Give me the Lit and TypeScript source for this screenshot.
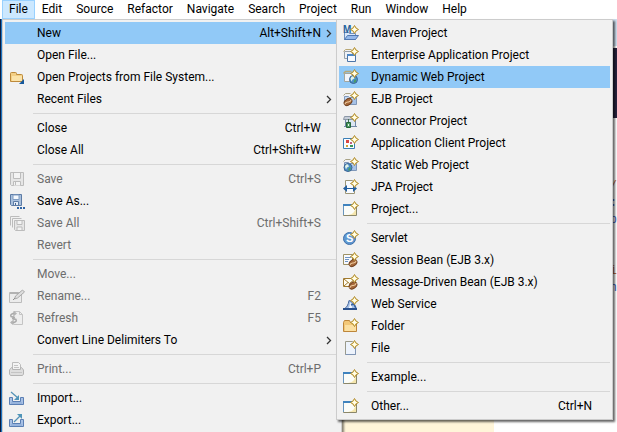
import { LitElement, html, css, svg, nothing, type SVGTemplateResult, type TemplateResult } from "lit";
import { customElement, property } from "lit/decorators.js";

interface Entry {
  label?: string;
  keys?: string;
  icon?: string;
  more?: boolean;
  disabled?: boolean;
  active?: boolean;
  separator?: boolean;
}

const SEP: Entry = { separator: true };

const BAR = ["File", "Edit", "Source", "Refactor", "Navigate", "Search", "Project", "Run", "Window", "Help"];

const FILE_MENU: Entry[] = [
  { label: "New", keys: "Alt+Shift+N", more: true, active: true },
  { label: "Open File..." },
  { label: "Open Projects from File System...", icon: "openProjects" },
  { label: "Recent Files", more: true },
  SEP,
  { label: "Close", keys: "Ctrl+W" },
  { label: "Close All", keys: "Ctrl+Shift+W" },
  SEP,
  { label: "Save", keys: "Ctrl+S", icon: "save", disabled: true },
  { label: "Save As...", icon: "saveAs" },
  { label: "Save All", keys: "Ctrl+Shift+S", icon: "saveAll", disabled: true },
  { label: "Revert", disabled: true },
  SEP,
  { label: "Move...", disabled: true },
  { label: "Rename...", keys: "F2", icon: "rename", disabled: true },
  { label: "Refresh", keys: "F5", icon: "refresh", disabled: true },
  { label: "Convert Line Delimiters To", more: true },
  SEP,
  { label: "Print...", keys: "Ctrl+P", icon: "print", disabled: true },
  SEP,
  { label: "Import...", icon: "importing" },
  { label: "Export...", icon: "exporting" },
];

const NEW_MENU: Entry[] = [
  { label: "Maven Project", icon: "maven" },
  { label: "Enterprise Application Project", icon: "enterprise" },
  { label: "Dynamic Web Project", icon: "dynamicWeb", active: true },
  { label: "EJB Project", icon: "ejb" },
  { label: "Connector Project", icon: "connector" },
  { label: "Application Client Project", icon: "client" },
  { label: "Static Web Project", icon: "staticWeb" },
  { label: "JPA Project", icon: "jpa" },
  { label: "Project...", icon: "wizard" },
  SEP,
  { label: "Servlet", icon: "servlet" },
  { label: "Session Bean (EJB 3.x)", icon: "session" },
  { label: "Message-Driven Bean (EJB 3.x)", icon: "message" },
  { label: "Web Service", icon: "service" },
  { label: "Folder", icon: "folder" },
  { label: "File", icon: "file" },
  SEP,
  { label: "Example...", icon: "wizard" },
  SEP,
  { label: "Other...", keys: "Ctrl+N", icon: "wizard" },
];

const sparkle = svg`
  <path d="M11.5 .5l1.500 2.500 2.500 1.500-2.500 1.500-1.500 2.500-1.500-2.500-2.500-1.500 2.500-1.500z" fill="#fff3b8" stroke="#b08a2c"/>
  <path d="M11.5 2.500v4M9.500 4.500h4" stroke="#fffdf0"/>`;

const blueFolder = svg`
  <path d="M1.5 13.500v-8h4l1 1h7v7z" fill="#c3d8f2" stroke="#7f97b8"/>
  <path d="M.5 4.500l2-2h5" fill="none" stroke="#a9a387"/>
  <path d="M3 8h10v5H3z" fill="#a6c2e8"/>`;

const globe = (cx: number, cy: number) => svg`
  <circle cx=${cx} cy=${cy} r="4" fill="#4b8fca" stroke="#3c6493"/>
  <path d="M${cx - 3} ${cy - 1}q1-3 3-2l1 2-2 1-1 2z" fill="#e2f3e6"/>
  <path d="M${cx + 1} ${cy}l2 0-1 3-2 0z" fill="#4b9d62"/>`;

const bean = (cx: number, cy: number) => svg`
  <g transform="rotate(-35 ${cx} ${cy})">
    <ellipse cx=${cx} cy=${cy} rx="4.2" ry="3" fill="#a5683a" stroke="#70401f"/>
    <path d="M${cx - 4} ${cy}q2-1.6 4 0t4 0" fill="none" stroke="#f0cfa4"/>
  </g>`;

const ICONS: Record<string, SVGTemplateResult> = {
  openProjects: svg`
    <path d="M1.500 12.500v-8q0-1 1-1h4q1 0 1 1v1h5q1 0 1 1v6z" fill="#f3cf85" stroke="#bd8a3b"/>
    <path d="M3 7h10v5H3z" fill="#fbe3a9"/>
    <path d="M15 10v5h-5z" fill="#17599c"/>`,
  save: svg`
    <path d="M1.500 1.500h13v13h-12l-1-1z" fill="#e6e6e6" stroke="#bcbcbc"/>
    <path d="M4.500 2v5.500h7V2M4.500 14.500v-4h7v4M6.500 11v3" fill="#f3f3f3" stroke="#bcbcbc"/>`,
  saveAs: svg`
    <path d="M1.500 1.500h11v11h-10l-1-1z" fill="#a9c0dd" stroke="#5c7ba5"/>
    <path d="M4 2h6v4.500H4z" fill="#f4f8fd" stroke="#7f9cc2"/>
    <path d="M4.500 12V8.500h5V12" fill="#e5edf7" stroke="#5c7ba5"/>
    <path d="M6.500 10v2" stroke="#44648f"/>
    <path d="M8 14h2v2H8zM11 14h2v2h-2zM14 14h2v2h-2z" fill="#2f64a5"/>`,
  saveAll: svg`
    <path d="M1.500 10.500v-9h9M3.500 12.500v-9h9" fill="none" stroke="#bcbcbc"/>
    <path d="M5.500 5.500h10v10h-9l-1-1z" fill="#e6e6e6" stroke="#bcbcbc"/>
    <path d="M8 6v3.500h5V6M8 15v-3h5v3" fill="#f3f3f3" stroke="#bcbcbc"/>`,
  rename: svg`
    <path d="M.5 4.500h12v10H.5z" fill="#ececec" stroke="#bcbcbc"/>
    <path d="M1 5h8" stroke="#b2b2b2" stroke-width="2"/>
    <path d="M5.500 11l1-3 7-6 2 2-7 6z" fill="#dedede" stroke="#a8a8a8"/>
    <path d="M4 12l2-2" stroke="#8f8f8f"/>`,
  refresh: svg`
    <path d="M4.500 1.500h6l3 3v10h-9z" fill="#eee" stroke="#c4c4c4"/>
    <path d="M10.500 1.500v3h3" fill="none" stroke="#c4c4c4"/>
    <path d="M6 3.500H4q-3 1-2 3l4 1M2 12.500h3q3-1 2-3l-4-1" fill="none" stroke="#aaa" stroke-width="1.500"/>
    <path d="M5 1v5l3-2.500zM4 10v5l-3-2.500z" fill="#b4b4b4"/>`,
  print: svg`
    <path d="M3.500 7.500v-6h6l2 2v4" fill="#f4f4f4" stroke="#bcbcbc"/>
    <path d="M5 4.500h4M5 6.500h5" stroke="#c4c4c4"/>
    <path d="M.5 9l2-2.500h1v2h8v-2h1l2 2.500v4l-1 1.500h-12l-1-1.500z" fill="#dedede" stroke="#b4b4b4"/>
    <path d="M2 11.500h11" stroke="#c4c4c4"/>`,
  importing: svg`
    <path d="M.5 7.500h3v4h8v-4h3v7H.5z" fill="#a8c1e5" stroke="#5b7fb4"/>
    <path d="M2 13h11" stroke="#86a6d4"/>
    <path d="M2 2l7 6" stroke="#5291b6" stroke-width="1.200"/>
    <path d="M10 5v5H5z" fill="#4f94b8"/>`,
  exporting: svg`
    <path d="M.5 7.500h3v4h8v-4h3v7H.5z" fill="#a8c1e5" stroke="#5b7fb4"/>
    <path d="M2 13h11" stroke="#86a6d4"/>
    <path d="M5 10l7-7" stroke="#5291b6" stroke-width="1.200"/>
    <path d="M8 2h5v5z" fill="#4f94b8"/>`,
  maven: svg`
    <path d="M1.500 14.500v-7h4l1 1h6v6z" fill="#d8e7fa" stroke="#6f8fbd"/>
    <path d="M1.500 14.500l3-4h11l-3 4z" fill="#94b8ea" stroke="#5077b0"/>
    <text x="0" y="8" font-family="Liberation Sans, sans-serif" font-weight="700" font-size="10" fill="#27639e">M</text>
    ${sparkle}`,
  enterprise: svg`
    <path d="M1.500 11.500v-7h8v7z" fill="#eef1f6" stroke="#98a0a8"/>
    <path d="M.5 4.500l2-2h6" fill="none" stroke="#b9a876"/>
    <path d="M4.500 7.500h8v7h-8z" fill="#f7faff" stroke="#4c75a8"/>
    <path d="M4 8h9" stroke="#4c86c6" stroke-width="2"/>
    ${sparkle}`,
  dynamicWeb: svg`
    <path d="M1.500 12.500v-8h8v8z" fill="#f2f5fa" stroke="#a3a79f"/>
    <path d="M.5 4.500l2-2h6" fill="none" stroke="#b9a876" stroke-width="1.500"/>
    ${globe(10.5, 10.5)}${sparkle}`,
  ejb: svg`${blueFolder}${bean(5, 11)}${sparkle}`,
  connector: svg`
    <path d="M1.500 3.500h8l3 3h-12z" fill="#c5cdd8" stroke="#8b97a6"/>
    <path d="M2 7h11v6H2z" fill="#dce6f3"/>
    <path d="M2.500 7v6M12.500 7v6M1 13.500h13" stroke="#7389a6"/>
    <path d="M5.500 6v3" stroke="#43704f"/>
    <path d="M3.500 9.500h4v5h-4z" fill="#4f9a63" stroke="#27663a"/>
    <path d="M5 11h1v2H5z" fill="#e9f7eb"/>
    ${sparkle}`,
  client: svg`
    <path d="M.5 3.500h11v10H.5z" fill="#fafcff" stroke="#3b7fb6"/>
    <path d="M3 5h3v3H3z" fill="#d84545"/><path d="M7 7h2v2H7z" fill="#c06282"/>
    <path d="M3 10h2v2H3z" fill="#d2a638"/><path d="M7 10h3v2H7z" fill="#3d9657"/>
    ${sparkle}`,
  staticWeb: svg`${blueFolder}${globe(5, 10.5)}${sparkle}`,
  jpa: svg`
    <path d="M2.500 1.500h7l2 3v10h-9z" fill="#f7faff" stroke="#9c9678"/>
    <path d="M1 9.500h12" stroke="#1d5b9b"/>
    <path d="M0 9.500L4 6v7zM14 9.500L10 6v7z" fill="#235f9f"/>
    ${sparkle}`,
  wizard: svg`
    <path d="M.5 3.500h13v11H.5z" fill="#fbfcf8" stroke="#8b8769"/>
    <path d="M13 6v8H5q7-1 8-8z" fill="#f5e6ad"/>
    <path d="M0 4h10" stroke="#3f83be" stroke-width="2"/>
    <path d="M.5 5v9" stroke="#6794bd"/>
    ${sparkle}`,
  servlet: svg`
    <circle cx="6.500" cy="8.500" r="6" fill="#5f97d0" stroke="#3e70aa"/>
    <text x="3" y="12" font-family="Liberation Sans, sans-serif" font-weight="700" font-size="11" fill="#fff">S</text>
    ${sparkle}`,
  session: svg`
    <path d="M.5 2.500h9v10H.5z" fill="#f9fafd" stroke="#9d9165"/>
    <path d="M2 5.500h6M2 7.500h4M2 9.500h3" stroke="#6e94c4"/>
    ${bean(10, 11)}${sparkle}`,
  message: svg`
    <path d="M.5 4.500h12v8H.5z" fill="#fffdf1" stroke="#a17a30"/>
    <path d="M1 5l5.500 4.500L12 5M1 12l4-3.500" fill="none" stroke="#a17a30"/>
    ${bean(10, 11.5)}${sparkle}`,
  service: svg`
    <path d="M6 4.500q4 1 7 8.500H1q4-2 5-8.500z" fill="#a6c1e6" stroke="#48699f"/>
    <path d="M7 6q2 2 2 7H5q2-2 2-7z" fill="#f3f7ff"/>
    <path d="M0 13h14" stroke="#29508c" stroke-width="2"/>
    <path d="M8 9l3-1 2 4" fill="none" stroke="#3763a3" stroke-width="1.500"/>
    ${sparkle}`,
  folder: svg`
    <path d="M.5 13.500v-9l1-2h5l1 2h5l1 1v8z" fill="#f3c878" stroke="#bd863a"/>
    <path d="M2 7h11v6H2z" fill="#fbe0a2"/>
    ${sparkle}`,
  file: svg`
    <path d="M2.500 1.500h7l3 3v10h-10z" fill="#edf3fc" stroke="#9a9a8b"/>
    <path d="M12.500 6v8.500h-10" fill="none" stroke="#8095b5"/>
    ${sparkle}`,
};

@customElement("menu-panel")
class MenuPanel extends LitElement {
  @property({ attribute: false }) entries: Entry[] = [];
  @property() label = "";

  static styles = css`
    :host {
      display: block;
      box-sizing: border-box;
      padding: 2px;
      border: 1px solid #ccc;
      background: #f1f1f1;
    }
    .item {
      display: flex;
      align-items: center;
      width: 100%;
      height: 22px;
      padding: 0 0 0 4px;
      border: 0;
      background: none;
      color: #000;
      font: inherit;
      text-align: left;
      white-space: nowrap;
    }
    .item:disabled { color: #6d6d6d; }
    .item.active { background: #91c9f7; }
    .icon { flex: none; width: 16px; height: 16px; margin-right: 12px; }
    .label { flex: 1; }
    .more { display: flex; width: 18px; padding-left: 5px; box-sizing: border-box; }
    hr { height: 1px; margin: 3px 0 3px 28px; border: 0; background: #d7d7d7; }
  `;

  private row(e: Entry): TemplateResult {
    if (e.separator) return html`<hr />`;
    return html`
      <button class="item ${e.active ? "active" : ""}" role="menuitem" ?disabled=${e.disabled}
        aria-haspopup=${e.more ? "menu" : nothing}>
        <svg class="icon" viewBox="0 0 16 16" fill="none" aria-hidden="true">${e.icon ? ICONS[e.icon] : nothing}</svg>
        <span class="label">${e.label}</span>
        <span>${e.keys ?? nothing}</span>
        <span class="more">
          ${e.more
            ? html`<svg width="6" height="9" viewBox="0 0 6 9" fill="none" aria-hidden="true">
                <path d="M1 1l3.500 3.500L1 8" stroke="#333" stroke-width="1.300" />
              </svg>`
            : nothing}
        </span>
      </button>`;
  }

  render() {
    return html`<div role="menu" aria-label=${this.label}>${this.entries.map((e) => this.row(e))}</div>`;
  }
}

@customElement("app-root")
class AppRoot extends LitElement {
  static styles = css`
    :host {
      display: flex;
      flex-direction: column;
      height: 100vh;
      overflow: hidden;
      background: #fff;
      color: #000;
      font: 12px/18px Roboto, "Noto Sans CJK KR", sans-serif;
    }
    .bar { display: flex; flex: none; height: 19px; padding-left: 2px; }
    .tab {
      padding: 0 6px;
      border: 1px solid transparent;
      background: none;
      color: inherit;
      font: inherit;
      line-height: 17px;
    }
    .tab.open { border-color: #99d1ff; background: #cce8ff; }
    .work { position: relative; flex: 1; display: flex; min-height: 0; }
    .edge { flex: none; width: 2px; background: linear-gradient(90deg, #0b1a3c 50%, #1c73c0 50%); }
    .editor { flex: 1; display: flex; flex-direction: column; }
    .toolbar { height: 27px; background: #cfdeee; }
    .tabs { height: 70px; margin-top: 2px; background: #28233f; }
    .code {
      flex: 1;
      margin: 0;
      padding-top: 60px;
      text-align: right;
      font: 12px/17px "Liberation Mono", monospace;
      color: #3f5fbf;
    }
    .line { display: block; height: 17px; }
    .warm { color: #c0704a; }
    .current { width: 80%; height: 14px; background: #fff5d9; }
    .file-menu { position: absolute; top: 0; left: 2px; width: 340px; box-shadow: 2px 2px 2px #0007; }
    .new-menu { position: absolute; top: 0; left: 336px; right: 4px; box-shadow: 2px 2px 2px #0009; }
  `;

  render() {
    return html`
      <nav class="bar" role="menubar">
        ${BAR.map((t, i) => html`<button class="tab ${i === 0 ? "open" : ""}" role="menuitem">${t}</button>`)}
      </nav>
      <main class="work">
        <div class="edge"></div>
        <div class="editor">
          <div class="toolbar"></div>
          <div class="tabs"></div>
          <pre class="code"><span class="line warm">/</span><span class="line">:</span><span class="line">p</span><span class="line"></span><span class="line"></span><span class="line warm">i</span><span class="line">n</span></pre>
          <div class="current"></div>
        </div>
        <menu-panel class="file-menu" label="File" .entries=${FILE_MENU}></menu-panel>
        <menu-panel class="new-menu" label="New" .entries=${NEW_MENU}></menu-panel>
      </main>`;
  }
}
